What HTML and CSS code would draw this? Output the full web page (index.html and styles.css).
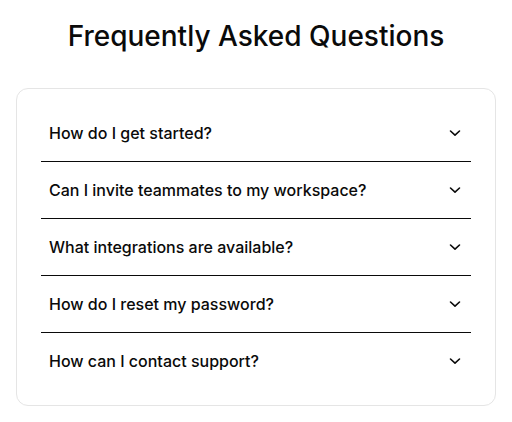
FILE: index.html
```html
<!DOCTYPE html>
<html lang="en">
<head>
<meta charset="utf-8">
<link rel="stylesheet" href="styles.css">
</head>
<body>
<main class="page">
  <h1 class="title">Frequently Asked Questions</h1>
  <section class="card">
    <div class="item"><span class="q">How do I get started?</span><svg class="chev" viewBox="0 0 16 16"><path d="M3.5 6 8 10.2 12.5 6"/></svg></div>
    <div class="item"><span class="q">Can I invite teammates to my workspace?</span><svg class="chev" viewBox="0 0 16 16"><path d="M3.5 6 8 10.2 12.5 6"/></svg></div>
    <div class="item"><span class="q">What integrations are available?</span><svg class="chev" viewBox="0 0 16 16"><path d="M3.5 6 8 10.2 12.5 6"/></svg></div>
    <div class="item"><span class="q">How do I reset my password?</span><svg class="chev" viewBox="0 0 16 16"><path d="M3.5 6 8 10.2 12.5 6"/></svg></div>
    <div class="item"><span class="q">How can I contact support?</span><svg class="chev" viewBox="0 0 16 16"><path d="M3.5 6 8 10.2 12.5 6"/></svg></div>
  </section>
</main>
</body>
</html>
```
FILE: styles.css
```css
* { box-sizing: border-box; }
html, body { margin: 0; background: #fff; }
body { font-family: Inter, "Noto Sans", sans-serif; color: #111; }
.page { padding: 16px; }
.title {
  margin: 3px 0 35px;
  font-size: 28px;
  line-height: 34px;
  font-weight: 500;
  text-align: center;
  color: #0a0a0a;
}
.card {
  border: 1px solid #e5e5e5;
  border-radius: 12px;
  padding: 16px 24px;
  background: #fff;
}
.item {
  display: flex;
  align-items: center;
  justify-content: space-between;
  height: 57px;
  padding: 0 8px;
  border-bottom: 1px solid #0a0a0a;
}
.item:last-child { border-bottom: none; height: 56px; }
.q { font-size: 16px; font-weight: 500; color: #0a0a0a; }
.chev { width: 16px; height: 16px; fill: none; stroke: #0a0a0a; stroke-width: 1.6; stroke-linecap: round; stroke-linejoin: round; }
```
